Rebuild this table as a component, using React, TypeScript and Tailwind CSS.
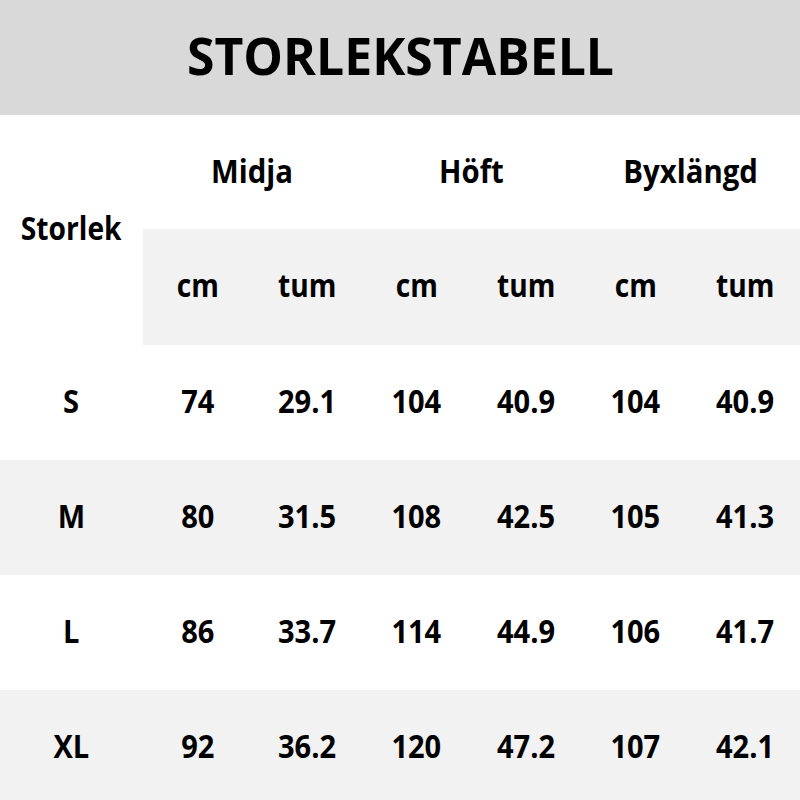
const rows = [
  { size: 'S', vals: ['74', '29.1', '104', '40.9', '104', '40.9'] },
  { size: 'M', vals: ['80', '31.5', '108', '42.5', '105', '41.3'] },
  { size: 'L', vals: ['86', '33.7', '114', '44.9', '106', '41.7'] },
  { size: 'XL', vals: ['92', '36.2', '120', '47.2', '107', '42.1'] },
];

const groups = ['Midja', 'Höft', 'Byxlängd'];

function Txt({ children, className = '' }: { children: React.ReactNode; className?: string }) {
  return <span className={`inline-block font-bold text-black ${className}`}>{children}</span>;
}

export default function App() {
  return (
    <div className="w-[800px] h-[800px] overflow-hidden bg-white" style={{ fontFamily: '"Open Sans", "Noto Sans", sans-serif' }}>
      <div className="h-[115px] bg-[#d9d9d9] flex items-center justify-center pb-[6px]">
        <Txt className="text-[52px] leading-none scale-x-[0.96]">STORLEKSTABELL</Txt>
      </div>

      <div className="flex h-[230px]">
        <div className="w-[143px] flex items-center justify-center pb-[4px]">
          <Txt className="text-[32px] scale-x-[0.88]">Storlek</Txt>
        </div>
        <div className="flex-1 flex flex-col">
          <div className="h-[114px] grid grid-cols-3 items-center pb-[2px]">
            {groups.map((g) => (
              <div key={g} className="text-center">
                <Txt className="text-[33px] scale-x-[0.89]">{g}</Txt>
              </div>
            ))}
          </div>
          <div className="h-[116px] bg-[#f2f2f2] grid grid-cols-6 items-center pb-[4px]">
            {['cm', 'tum', 'cm', 'tum', 'cm', 'tum'].map((u, i) => (
              <div key={i} className="text-center">
                <Txt className="text-[32px] scale-x-[0.88]">{u}</Txt>
              </div>
            ))}
          </div>
        </div>
      </div>

      {rows.map((r, i) => (
        <div
          key={r.size}
          className={`h-[115px] grid grid-cols-[143px_repeat(6,1fr)] items-center pb-[4px] ${i % 2 === 1 ? 'bg-[#f2f2f2]' : 'bg-white'}`}
        >
          <div className="text-center">
            <Txt className="text-[33px] scale-x-[0.88]">{r.size}</Txt>
          </div>
          {r.vals.map((v, j) => (
            <div key={j} className="text-center">
              <Txt className="text-[33px] scale-x-[0.88]">{v}</Txt>
            </div>
          ))}
        </div>
      ))}
    </div>
  );
}
